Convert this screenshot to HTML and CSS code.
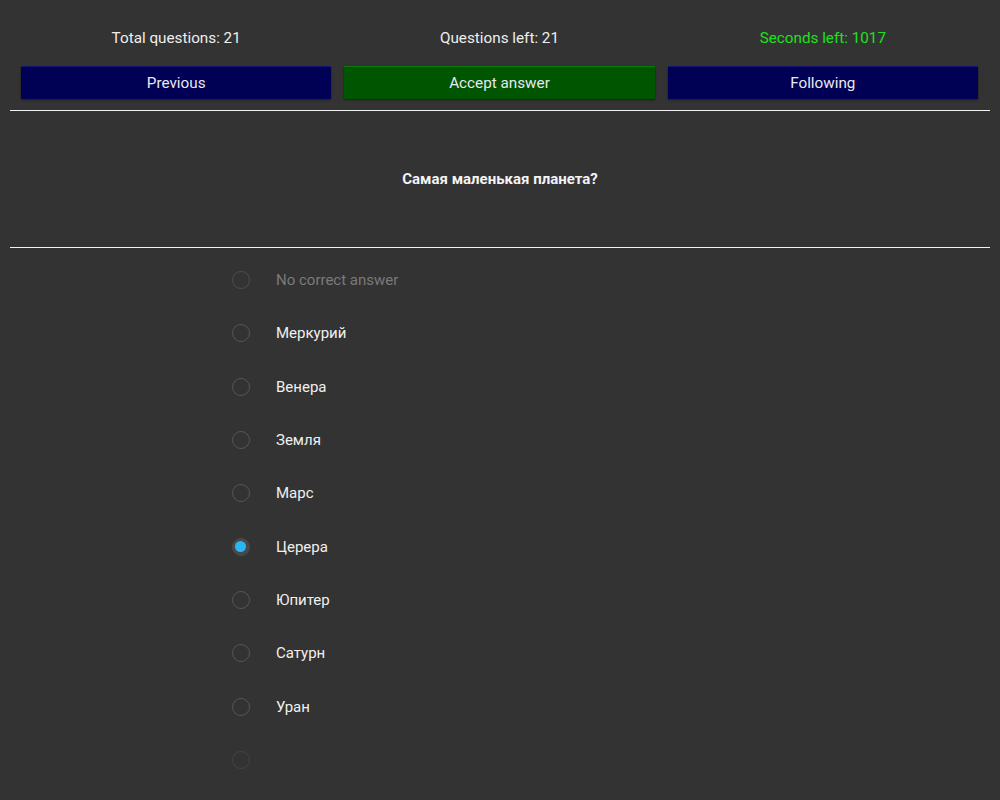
FILE: index.html
```html
<!DOCTYPE html>
<html>
<head>
<meta charset="utf-8">
<link rel="stylesheet" href="styles.css">
</head>
<body>
<div class="page">
  <div class="stats">
    <div class="stat">Total questions: 21</div>
    <div class="stat">Questions left: 21</div>
    <div class="stat timer">Seconds left: 1017</div>
  </div>
  <div class="buttons">
    <button class="btn nav">Previous</button>
    <button class="btn accept">Accept answer</button>
    <button class="btn nav">Following</button>
  </div>
  <div class="rule"></div>
  <div class="question">Самая маленькая планета?</div>
  <div class="rule"></div>
  <ul class="answers">
    <li class="answer muted"><span class="radio"></span><span class="label">No correct answer</span></li>
    <li class="answer"><span class="radio"></span><span class="label">Меркурий</span></li>
    <li class="answer"><span class="radio"></span><span class="label">Венера</span></li>
    <li class="answer"><span class="radio"></span><span class="label">Земля</span></li>
    <li class="answer"><span class="radio"></span><span class="label">Марс</span></li>
    <li class="answer"><span class="radio checked"></span><span class="label">Церера</span></li>
    <li class="answer"><span class="radio"></span><span class="label">Юпитер</span></li>
    <li class="answer"><span class="radio"></span><span class="label">Сатурн</span></li>
    <li class="answer"><span class="radio"></span><span class="label">Уран</span></li>
    <li class="answer faint"><span class="radio"></span><span class="label"></span></li>
  </ul>
</div>
</body>
</html>
```
FILE: styles.css
```css
html, body {
  margin: 0;
  padding: 0;
  background: #333333;
  height: 100%;
  overflow: hidden;
}
body {
  font-family: Roboto, "Liberation Sans", sans-serif;
  color: #eeeeee;
}
.page {
  padding: 0 10px;
}
.stats {
  display: flex;
  gap: 13px;
  padding: 28px 12px 0 11px;
  height: 20px;
}
.stat {
  flex: 1;
  text-align: center;
  font-size: 15.25px;
  line-height: 20px;
  color: #eeeeee;
}
.stat.timer {
  color: #1ee01e;
}
.buttons {
  display: flex;
  gap: 13px;
  padding: 18px 12px 0 11px;
}
.btn {
  flex: 1;
  height: 33px;
  border: none;
  border-top: 1px solid #16166e;
  font-family: Roboto, "Liberation Sans", sans-serif;
  font-size: 15.25px;
  color: #e8e8f0;
  box-shadow: 0 1px 2px rgba(0,0,0,0.45);
  padding: 0;
}
.btn.nav {
  background: #000055;
}
.btn.accept {
  background: #005500;
  border-top-color: #0b7a0b;
}
.rule {
  height: 1px;
  background: #f2f2f2;
}
.buttons + .rule {
  margin-top: 11px;
}
.question {
  height: 136px;
  display: flex;
  align-items: center;
  justify-content: center;
  font-size: 15px;
  font-weight: bold;
  color: #f4f4f4;
}
.answers {
  list-style: none;
  margin: 0;
  padding: 5.5px 0 0 222px;
}
.answer {
  display: flex;
  align-items: center;
  height: 53.3px;
  font-size: 15px;
}
.radio {
  box-sizing: border-box;
  width: 18px;
  height: 18px;
  border-radius: 50%;
  border: 1.5px solid #555555;
  flex: none;
}
.radio.checked {
  border-color: #4a4a4a;
  background: #484848;
  position: relative;
}
.radio.checked::after {
  content: "";
  position: absolute;
  left: 2px;
  top: 2px;
  width: 11px;
  height: 11px;
  border-radius: 50%;
  background: #29b6f6;
}
.label {
  margin-left: 26px;
  color: #f0f0f0;
}
.muted .label {
  color: #7a7a7a;
}
.muted .radio {
  border-color: #4e4e4e;
}
.faint .radio {
  border-color: #444444;
}
```
